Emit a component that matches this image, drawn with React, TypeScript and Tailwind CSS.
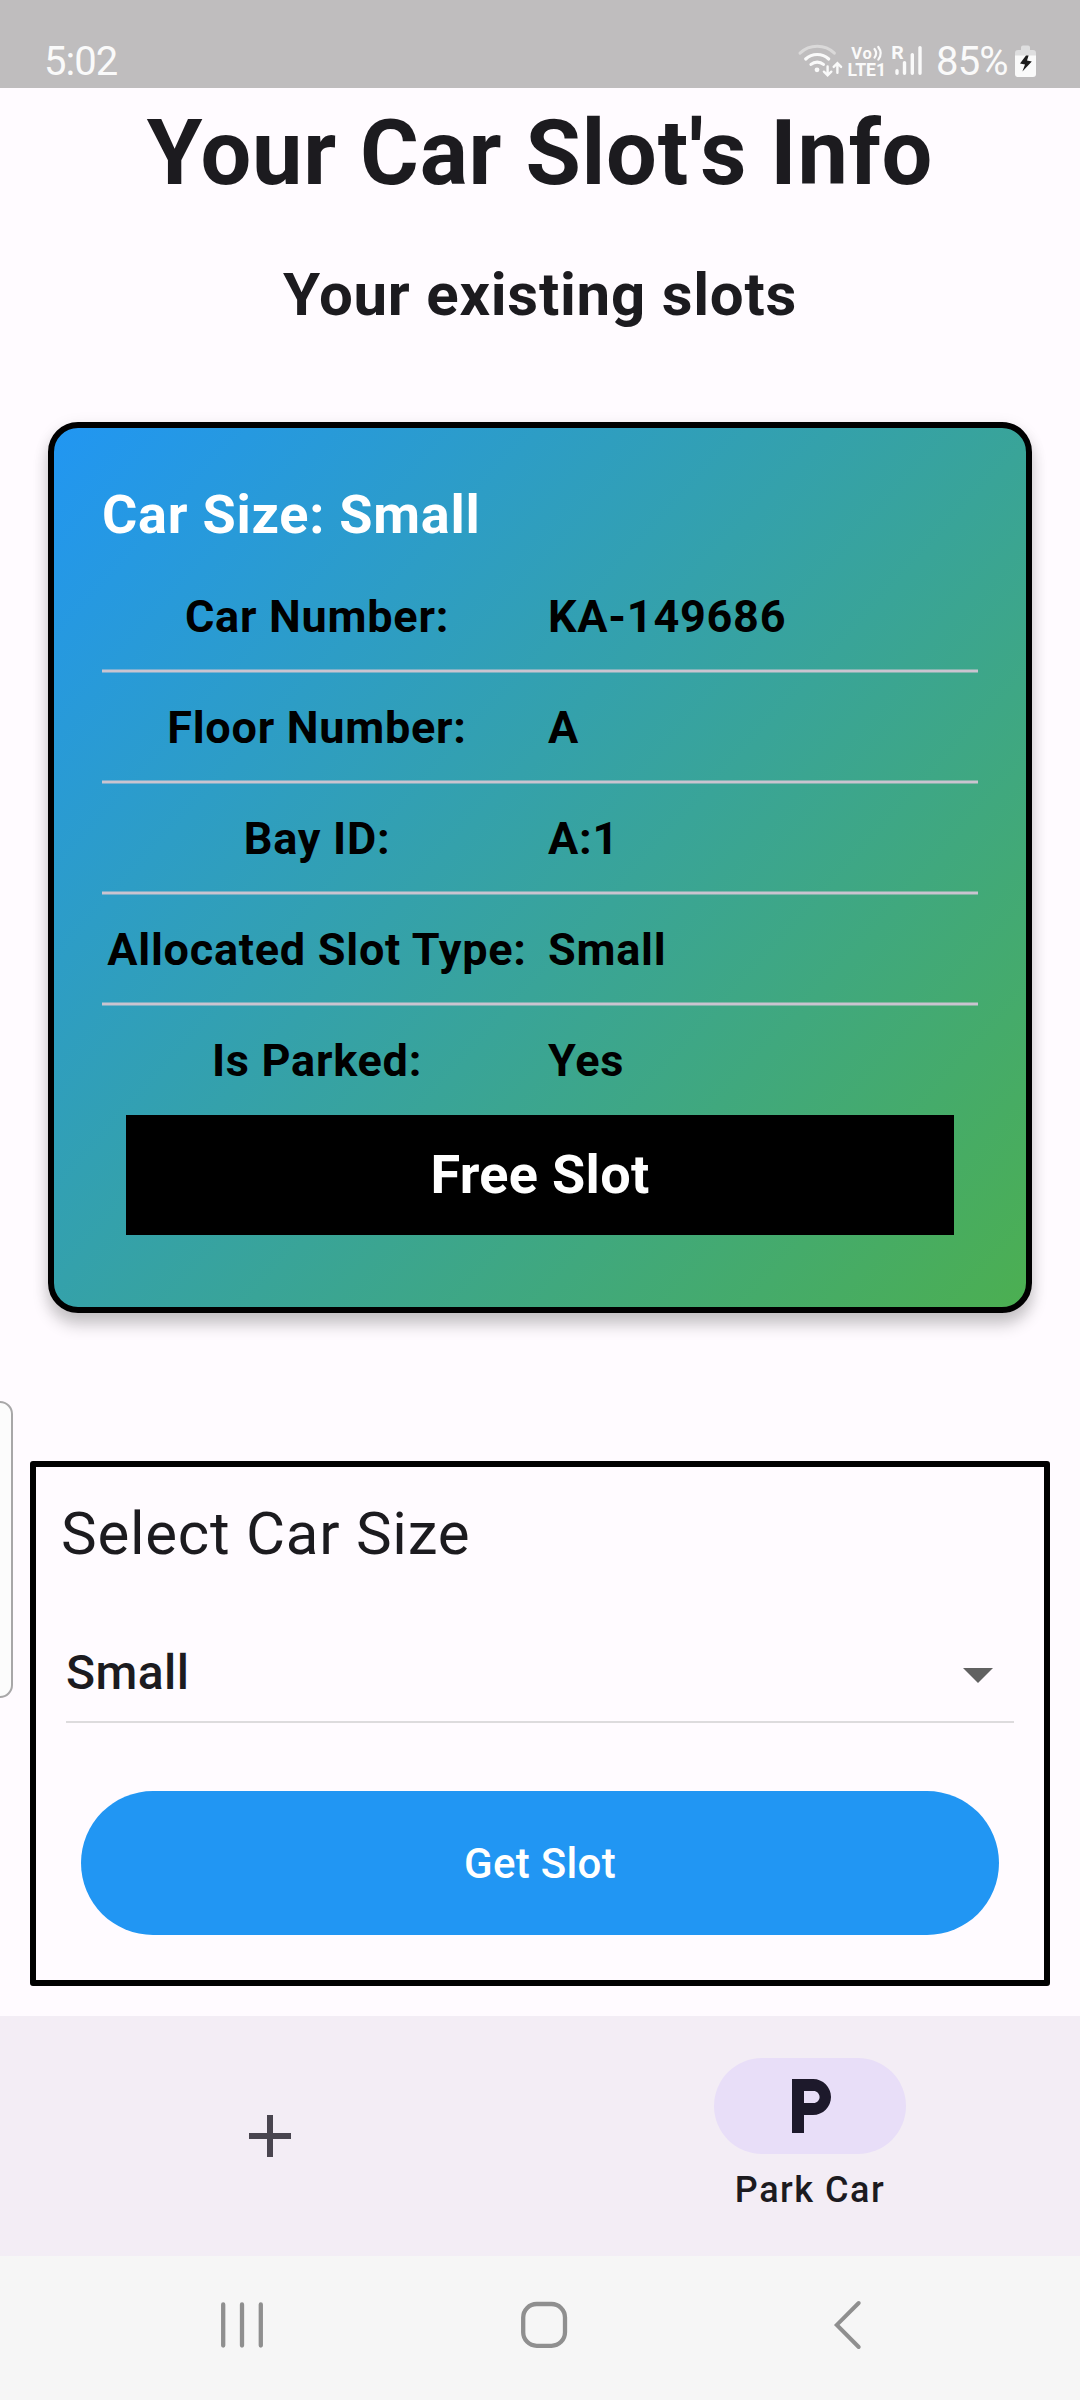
const rows: [string, string][] = [
  ['Car Number:', 'KA-149686'],
  ['Floor Number:', 'A'],
  ['Bay ID:', 'A:1'],
  ['Allocated Slot Type:', 'Small'],
  ['Is Parked:', 'Yes'],
];

function SignalIcons() {
  return (
    <svg width="130" height="40" viewBox="796 42 130 40" fill="none" stroke="#fafafa" strokeLinecap="round">
      <path d="M800 53.2a25 25 0 0 1 34.4 0" strokeWidth="3" stroke="#dad9d9" />
      <path d="M805.7 59a17 17 0 0 1 23 0" strokeWidth="3.2" />
      <path d="M811 64.4a9.5 9.5 0 0 1 12.4 0" strokeWidth="3.2" />
      <circle cx="817" cy="69.8" r="2.4" fill="#fafafa" stroke="none" />
      <path d="M827.6 66.5v8.5m-3.7-3.3 3.7 3.7 3.7-3.7M837.4 72.7v-9m-3.7 3.2 3.7-3.7 3.7 3.7" strokeWidth="2.4" />
      <g fill="#fafafa" stroke="none" fontFamily="Roboto, sans-serif" fontWeight="700">
        <text x="851.3" y="58.5" fontSize="16.5" textLength="20.5">Vo</text>
        <text x="847.6" y="76" fontSize="17.5" textLength="38.5" lengthAdjust="spacingAndGlyphs">LTE1</text>
        <text x="891.3" y="58.5" fontSize="17.5" textLength="12.5" lengthAdjust="spacingAndGlyphs">R</text>
      </g>
      <path d="M874.5 49q3.2 4.200 0 8.600M878.300 47q4.800 6.500 0 12.600" strokeWidth="2.200" />
      <path d="M897 70.700v2.600M904.500 62.600v10.700M912.300 54.600v18.700M920 47.600v25.700" strokeWidth="3.400" />
    </svg>
  );
}

function BatteryIcon() {
  return (
    <svg width="22" height="34" viewBox="1015 44 22 34">
      <path d="M1021 47.500q0-2 2-2h5q2 0 2 2V50h3q3 0 3 3v3h-21v-3q0-3 3-3h3z" fill="#dededf" />
      <path d="M1015 55.500h21V74q0 3-3 3h-15q-3 0-3-3z" fill="#fafafa" />
      <path d="M1026 55.500 1020 63.600l5 .9-2.600 7 9.400-9.900-4.800-1 1.600-5.100z" fill="#1c1c1c" />
    </svg>
  );
}

function StatusBar() {
  return (
    <header className="flex h-[88px] items-start bg-[#bfbdbe] pl-[44px] pr-[43px] pt-[38px] text-[40px] leading-[48px] text-[#fafafa]">
      <span className="tracking-[-1px]">5:02</span>
      <div className="ml-auto flex">
        <div className="pt-1"><SignalIcons /></div>
        <span className="ml-[10px] w-[79px] whitespace-nowrap tracking-[-0.8px]">85%</span>
        <div className="pt-[6px]"><BatteryIcon /></div>
      </div>
    </header>
  );
}

function SlotCard() {
  return (
    <section className="mx-12 mt-[92px] h-[891px] rounded-[30px] border-[6px] border-black bg-[linear-gradient(132.16deg,#2196f3,#4caf50)] bg-origin-border px-12 pt-[55px] shadow-[0_12px_16px_rgba(0,0,0,0.2),0_3px_16px_rgba(0,0,0,0.08)]">
      <h3 className="h-[79px] text-[54px] font-bold leading-[64px] tracking-[0.75px] text-white">Car Size: Small</h3>
      <div>
        {rows.map(([label, value], i) => (
          <div key={label}>
            {i > 0 && <div className="h-1 border-y border-[#cac4d0]/50 bg-[#cac4d0] bg-clip-padding" />}
            <div className="flex h-[107px] items-center pt-[2px] text-[45px] font-bold leading-[52px] tracking-[0.75px] text-black">
              <span className="w-[430px] whitespace-nowrap text-center">{label}</span>
              <span className="ml-4">{value}</span>
            </div>
          </div>
        ))}
      </div>
      <button className="mx-6 mt-[2px] block h-[120px] w-[828px] bg-black text-[54px] font-bold leading-[120px] tracking-[0.3px] text-white">
        Free Slot
      </button>
    </section>
  );
}

function SizeForm() {
  return (
    <section className="mx-[30px] mt-[148px] h-[525px] rounded-[3px] border-[6px] border-black px-[30px]">
      <h3 className="-ml-[5px] pt-[32px] text-[60px] leading-[70px] tracking-[0.75px]">Select Car Size</h3>
      <div className="mt-[76px] flex h-[78px] items-start justify-between border-b-2 border-[#dddbdd] pr-[21px]">
        <span className="text-[48px] font-medium leading-[56px] tracking-[0.45px]">Small</span>
        <svg className="mt-[23px]" width="30" height="15" viewBox="0 0 30 15"><path d="M0 0h30L15 15z" fill="#616161" /></svg>
      </div>
      <button className="mx-[15px] mt-[68px] block h-[144px] w-[918px] rounded-full bg-[#2196f3] text-[42px] font-medium leading-[146px] tracking-[0.3px] text-white">
        Get Slot
      </button>
    </section>
  );
}

function BottomNav() {
  return (
    <nav className="grid h-[240px] grid-cols-2 bg-[#f3edf5]">
      <div className="flex items-center justify-center">
        <svg width="42" height="42" viewBox="0 0 42 42"><path d="M21 0v42M0 21h42" stroke="#49454f" strokeWidth="6" /></svg>
      </div>
      <div className="flex flex-col items-center pt-[42px]">
        <div className="flex h-24 w-48 items-center justify-center rounded-full bg-[#e8def8]">
          <svg width="72" height="72" viewBox="0 0 24 24" fill="#1d192b">
            <path d="M13 3H6v18h4v-6h3c3.310 0 6-2.690 6-6s-2.690-6-6-6zm.2 8H10V7h3.200c1.100 0 2 .9 2 2s-.9 2-2 2z" />
          </svg>
        </div>
        <span className="mt-3 text-[36px] font-medium leading-[48px] tracking-[1.5px]">Park Car</span>
      </div>
    </nav>
  );
}

function SystemNav() {
  return (
    <footer className="flex h-[144px] items-start bg-[#f6f6f6] pl-[220px] pt-[44px]">
      <svg width="44" height="50" viewBox="220 2300 44 50" stroke="#8f8f8f" strokeWidth="4.300" strokeLinecap="round">
        <path d="M223.200 2304.500v41M242 2304.500v41M260.800 2304.500v41" />
      </svg>
      <svg className="ml-[255px]" width="50" height="50" viewBox="519 2300 50 50" fill="none" stroke="#8f8f8f" strokeWidth="4.300">
        <rect x="523.200" y="2304" width="41.800" height="41.800" rx="13.500" />
      </svg>
      <svg className="ml-[263px]" width="32" height="50" viewBox="832 2300 32 50" fill="none" stroke="#8f8f8f" strokeWidth="4" strokeLinecap="round">
        <path d="M858.700 2303 836.800 2324.900 858.700 2347" />
      </svg>
    </footer>
  );
}

export default function App() {
  return (
    <div className="relative flex h-[2400px] w-[1080px] flex-col overflow-hidden bg-[#fffbff] font-[Roboto,sans-serif] text-[#1c1b1f]">
      <StatusBar />
      <main className="flex h-[1928px] flex-col">
        <h1 className="mt-[13px] text-center text-[90px] font-bold leading-[106px] tracking-[0.75px]">Your Car Slot&apos;s Info</h1>
        <h2 className="mt-[53px] text-center text-[60px] font-bold leading-[70px] tracking-[0.75px]">Your existing slots</h2>
        <SlotCard />
        <SizeForm />
      </main>
      <BottomNav />
      <SystemNav />
      <div className="absolute -left-5 top-[1401px] h-[297px] w-[33px] rounded-[13px] border-2 border-[#a8a7a8] bg-[#fcfcfc]" />
    </div>
  );
}
